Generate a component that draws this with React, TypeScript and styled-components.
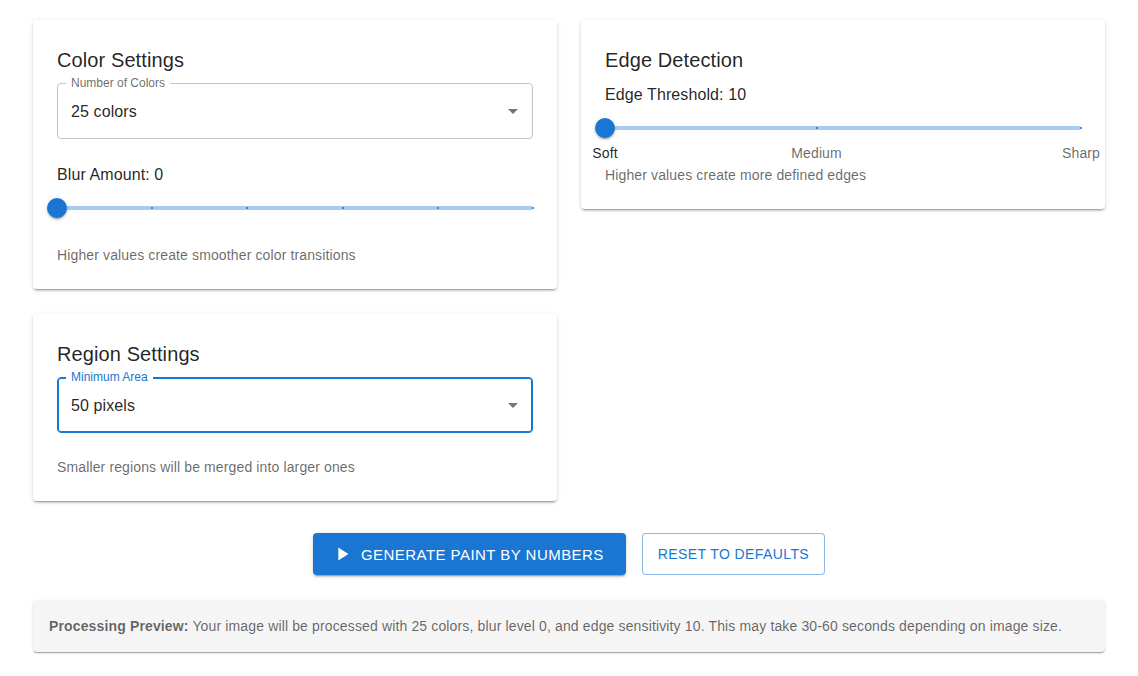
import styled, { createGlobalStyle } from 'styled-components';

const GlobalStyle = createGlobalStyle`
  body {
    margin: 0;
    background: #fff;
    font-family: "Liberation Sans", Arial, sans-serif;
    color: rgba(0, 0, 0, 0.87);
  }
`;

const PRIMARY = '#1976d2';

const Page = styled.div`
  padding: 20px 33px;
`;

const Grid = styled.div`
  display: grid;
  grid-template-columns: 1fr 1fr;
  gap: 25px 24px;
  align-items: start;
`;

const Card = styled.section`
  background: #fff;
  border-radius: 4px;
  padding: 24px;
  box-shadow: 0px 3px 1px -2px rgba(0, 0, 0, 0.2), 0px 2px 2px 0px rgba(0, 0, 0, 0.14),
    0px 1px 5px 0px rgba(0, 0, 0, 0.12);
`;

const Title = styled.h2`
  margin: 0 0 7px;
  font-size: 20px;
  font-weight: 400;
  line-height: 32px;
  letter-spacing: 0.1px;
`;

const FieldLabel = styled.div`
  font-size: 16px;
  line-height: 24px;
  margin-bottom: 6px;
  letter-spacing: 0.1px;
`;

const Caption = styled.p<{ $gap?: number }>`
  margin: ${(p) => p.$gap ?? 0}px 0 0;
  font-size: 14px;
  line-height: 20px;
  letter-spacing: 0.13px;
  color: rgba(0, 0, 0, 0.6);
`;

const SelectBox = styled.div<{ $focused?: boolean }>`
  position: relative;
  height: 56px;
  box-sizing: border-box;
  border: 1px solid ${(p) => (p.$focused ? PRIMARY : 'rgba(0, 0, 0, 0.23)')};
  box-shadow: ${(p) => (p.$focused ? `inset 0 0 0 1px ${PRIMARY}` : 'none')};
  border-radius: 4px;
  display: flex;
  align-items: center;
  padding: 0 13px;
  margin-bottom: 24px;
`;

const FloatLabel = styled.span<{ $focused?: boolean }>`
  position: absolute;
  top: -9px;
  left: 8px;
  padding: 0 5px;
  background: #fff;
  font-size: 12px;
  line-height: 16px;
  color: ${(p) => (p.$focused ? PRIMARY : 'rgba(0, 0, 0, 0.6)')};
`;

const SelectValue = styled.span`
  flex: 1;
  font-size: 16px;
  line-height: 23px;
  letter-spacing: 0.1px;
`;

const Arrow = styled.svg`
  width: 24px;
  height: 24px;
  margin-right: -6px;
  fill: rgba(0, 0, 0, 0.54);
`;

const SliderRoot = styled.div`
  position: relative;
  padding: 13px 0;
  margin-bottom: 22px;
`;

const Rail = styled.div`
  position: relative;
  height: 4px;
  border-radius: 2px;
  background: rgba(25, 118, 210, 0.38);
`;

const Mark = styled.span`
  position: absolute;
  top: 1px;
  width: 2px;
  height: 2px;
  border-radius: 1px;
  background: ${PRIMARY};
  transform: translateX(-1px);
`;

const Thumb = styled.span`
  position: absolute;
  top: -8px;
  width: 20px;
  height: 20px;
  border-radius: 50%;
  background: ${PRIMARY};
  transform: translateX(-10px);
  box-shadow: 0px 3px 1px -2px rgba(0, 0, 0, 0.2), 0px 2px 2px 0px rgba(0, 0, 0, 0.14),
    0px 1px 5px 0px rgba(0, 0, 0, 0.12);
`;

const MarkLabel = styled.span<{ $active?: boolean }>`
  position: absolute;
  top: 30px;
  transform: translateX(-50%);
  font-size: 14px;
  line-height: 20px;
  letter-spacing: 0.13px;
  white-space: nowrap;
  color: ${(p) => (p.$active ? 'rgba(0, 0, 0, 0.87)' : 'rgba(0, 0, 0, 0.6)')};
`;

const Actions = styled.div`
  display: flex;
  justify-content: center;
  gap: 16px;
  margin-top: 32px;
`;

const Button = styled.button<{ $variant: 'contained' | 'outlined' }>`
  display: inline-flex;
  align-items: center;
  height: 42px;
  box-sizing: border-box;
  border-radius: 4px;
  font-family: inherit;
  font-weight: 400;
  text-transform: uppercase;
  cursor: pointer;
  ${(p) =>
    p.$variant === 'contained'
      ? `
    background: ${PRIMARY};
    color: #fff;
    border: none;
    padding: 0 22px;
    font-size: 15px;
    letter-spacing: 0.46px;
    box-shadow: 0px 3px 1px -2px rgba(0,0,0,0.2), 0px 2px 2px 0px rgba(0,0,0,0.14), 0px 1px 5px 0px rgba(0,0,0,0.12);
  `
      : `
    background: #fff;
    color: ${PRIMARY};
    border: 1px solid rgba(25, 118, 210, 0.5);
    padding: 0 15px;
    font-size: 14px;
    letter-spacing: 0.4px;
  `}
`;

const PlayIcon = styled.svg`
  width: 22px;
  height: 22px;
  fill: currentColor;
  margin: 0 8px 0 -4px;
`;

const Preview = styled.div`
  margin-top: 25px;
  background: #f5f5f5;
  border-radius: 4px;
  padding: 16px;
  font-size: 14px;
  line-height: 20px;
  letter-spacing: 0.14px;
  color: rgba(0, 0, 0, 0.6);
  box-shadow: 0px 2px 1px -1px rgba(0, 0, 0, 0.2), 0px 1px 1px 0px rgba(0, 0, 0, 0.14),
    0px 1px 3px 0px rgba(0, 0, 0, 0.12);

  strong {
    font-weight: 700;
  }
`;

type SelectProps = { label: string; value: string; focused?: boolean };

const Select = ({ label, value, focused }: SelectProps) => (
  <SelectBox $focused={focused}>
    <FloatLabel $focused={focused}>{label}</FloatLabel>
    <SelectValue>{value}</SelectValue>
    <Arrow viewBox="0 0 24 24">
      <path d="M7 10l5 5 5-5z" />
    </Arrow>
  </SelectBox>
);

type SliderMark = { value: number; label?: string };
type SliderProps = { min: number; max: number; value: number; marks: SliderMark[] };

const Slider = ({ min, max, value, marks }: SliderProps) => {
  const pct = (v: number) => `${((v - min) / (max - min)) * 100}%`;
  return (
    <SliderRoot>
      <Rail>
        {marks.map((m) => (
          <Mark key={m.value} style={{ left: pct(m.value) }} />
        ))}
        <Thumb style={{ left: pct(value) }} />
      </Rail>
      {marks
        .filter((m) => m.label)
        .map((m) => (
          <MarkLabel key={m.value} $active={m.value <= value} style={{ left: pct(m.value) }}>
            {m.label}
          </MarkLabel>
        ))}
    </SliderRoot>
  );
};

const blurMarks = [0, 1, 2, 3, 4, 5].map((v) => ({ value: v }));
const edgeMarks = [
  { value: 10, label: 'Soft' },
  { value: 50, label: 'Medium' },
  { value: 100, label: 'Sharp' },
];

const App = () => (
  <Page>
    <GlobalStyle />
    <Grid>
      <Card>
        <Title>Color Settings</Title>
        <Select label="Number of Colors" value="25 colors" />
        <FieldLabel>Blur Amount: 0</FieldLabel>
        <Slider min={0} max={5} value={0} marks={blurMarks} />
        <Caption>Higher values create smoother color transitions</Caption>
      </Card>

      <Card>
        <Title>Edge Detection</Title>
        <FieldLabel>Edge Threshold: 10</FieldLabel>
        <Slider min={10} max={100} value={10} marks={edgeMarks} />
        <Caption>Higher values create more defined edges</Caption>
      </Card>

      <Card>
        <Title>Region Settings</Title>
        <Select label="Minimum Area" value="50 pixels" focused />
        <Caption $gap={1}>Smaller regions will be merged into larger ones</Caption>
      </Card>
    </Grid>

    <Actions>
      <Button $variant="contained">
        <PlayIcon viewBox="0 0 24 24">
          <path d="M8 5v14l11-7z" />
        </PlayIcon>
        Generate Paint by Numbers
      </Button>
      <Button $variant="outlined">Reset to Defaults</Button>
    </Actions>

    <Preview>
      <strong>Processing Preview:</strong> Your image will be processed with 25 colors, blur level 0, and
      edge sensitivity 10. This may take 30-60 seconds depending on image size.
    </Preview>
  </Page>
);

export default App;
